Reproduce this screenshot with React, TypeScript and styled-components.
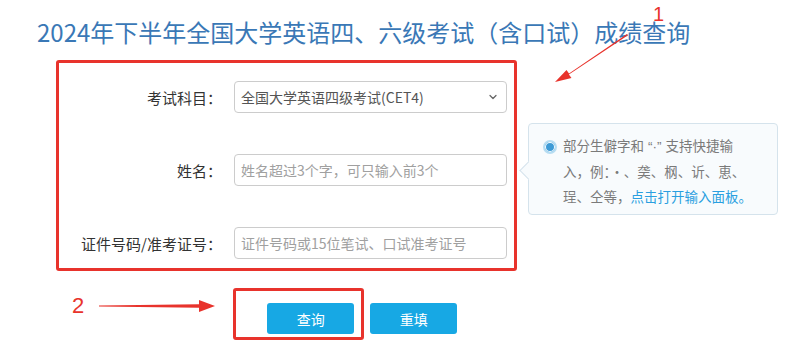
import React from "react";
import styled, { createGlobalStyle } from "styled-components";
import { ChevronDown } from "lucide-react";

const GlobalStyle = createGlobalStyle`
  html, body {
    margin: 0;
    padding: 0;
    background: #FFFFFF;
  }
  body {
    font-family: "Noto Sans CJK SC", "Noto Sans", "Liberation Sans", sans-serif;
  }
`;

const ANNOT_RED = "#E8332C";

const Page = styled.div`
  position: relative;
  width: 800px;
  height: 355px;
  overflow: hidden;
`;

const Title = styled.h1`
  margin: 0;
  padding: 16px 0 0 37px;
  font-size: 24px;
  line-height: 32px;
  font-weight: 400;
  color: #3A78B6;
`;

const Main = styled.div`
  display: flex;
  align-items: flex-start;
  margin-top: 12px;
  padding-left: 56px;
`;

const FormFrame = styled.div`
  width: 461px;
  box-sizing: border-box;
  border: 3px solid ${ANNOT_RED};
  border-radius: 3px;
  padding: 18px 7px 9px 0;
  display: grid;
  grid-template-columns: 163px 273px;
  column-gap: 12px;
  row-gap: 41px;
  align-items: center;
`;

const Label = styled.label`
  text-align: right;
  font-size: 15px;
  color: #333333;
  white-space: nowrap;
`;

const SelectWrap = styled.div`
  position: relative;
  height: 32px;
`;

const Select = styled.select`
  appearance: none;
  width: 100%;
  height: 32px;
  box-sizing: border-box;
  border: 1px solid #CCCCCC;
  border-radius: 4px;
  background: #FFFFFF;
  padding: 0 24px 0 6px;
  font-family: inherit;
  font-size: 14px;
  color: #555555;
  outline: none;
`;

const Chevron = styled(ChevronDown)`
  position: absolute;
  right: 8px;
  top: 10px;
  color: #666666;
  pointer-events: none;
`;

const Input = styled.input`
  width: 100%;
  height: 32px;
  box-sizing: border-box;
  border: 1px solid #CCCCCC;
  border-radius: 4px;
  padding: 0 6px;
  font-family: inherit;
  font-size: 14px;
  color: #555555;
  outline: none;

  &::placeholder {
    color: #A0A0A0;
  }
`;

const Tip = styled.div`
  position: relative;
  margin: 63px 0 0 11px;
  width: 250px;
  height: 92px;
  box-sizing: border-box;
  border: 1px solid #D5E3EC;
  border-radius: 4px;
  background: #F8FBFD;
  padding: 9px 8px 6px 14px;
  display: flex;
  gap: 6px;

  &::before {
    content: "";
    position: absolute;
    left: -7px;
    top: 40px;
    width: 12px;
    height: 12px;
    background: #F8FBFD;
    border-left: 1px solid #D5E3EC;
    border-bottom: 1px solid #D5E3EC;
    transform: rotate(45deg);
  }
`;

const Radio = styled.span`
  flex: none;
  width: 10px;
  height: 10px;
  margin-top: 7px;
  border-radius: 50%;
  border: 2px solid #B7DDF2;
  background: #3E9BD6;
  box-shadow: inset 0 0 0 1px #FFFFFF;
`;

const TipText = styled.p`
  margin: 0;
  font-size: 13.5px;
  line-height: 25px;
  color: #7A7A7A;
  white-space: nowrap;
`;

const Latin = styled.span`
  font-family: "Liberation Sans", sans-serif;
  margin: 0 4px;
`;

const TipLink = styled.a`
  color: #2A9FE0;
  text-decoration: none;
`;

const ActionRow = styled.div`
  display: flex;
  align-items: flex-start;
  margin-top: 17px;
`;

const StepNumber = styled.span`
  margin: 5px 0 0 72px;
  font-family: "Liberation Sans", "Noto Sans", sans-serif;
  font-size: 22px;
  line-height: 26px;
  color: ${ANNOT_RED};
`;

const ArrowSvg = styled.svg`
  margin: 11px 0 0 15px;
`;

const ButtonFrame = styled.div`
  margin-left: 18px;
  border: 3px solid ${ANNOT_RED};
  border-radius: 3px;
  padding: 12px 7px 3px 31px;
`;

const Button = styled.button<{ $offset?: number }>`
  width: 87px;
  height: 31px;
  margin: ${(p) => p.$offset ?? 0}px 0 0 ${(p) => (p.$offset ? 6 : 0)}px;
  border: none;
  border-radius: 3px;
  background: #17A8E4;
  color: #FFFFFF;
  font-family: inherit;
  font-size: 14px;
  cursor: pointer;
`;

const Pointer = styled.svg`
  position: absolute;
  left: 540px;
  top: 0;
`;

const PointerNumber = styled.span`
  position: absolute;
  left: 653px;
  top: 2px;
  font-family: "Liberation Sans", "Noto Sans", sans-serif;
  font-size: 20px;
  line-height: 24px;
  color: ${ANNOT_RED};
`;

const App = () => {
  return (
    <Page>
      <GlobalStyle />
      <Title>2024年下半年全国大学英语四、六级考试（含口试）成绩查询</Title>

      <Main>
        <FormFrame>
          <Label>考试科目：</Label>
          <SelectWrap>
            <Select defaultValue="cet4">
              <option value="cet4">全国大学英语四级考试(CET4)</option>
              <option value="cet6">全国大学英语六级考试(CET6)</option>
            </Select>
            <Chevron size={12} strokeWidth={2.5} />
          </SelectWrap>

          <Label>姓名：</Label>
          <Input placeholder="姓名超过3个字，可只输入前3个" />

          <Label>证件号码/准考证号：</Label>
          <Input placeholder="证件号码或15位笔试、口试准考证号" />
        </FormFrame>

        <Tip>
          <Radio />
          <TipText>
            部分生僻字和<Latin>“·”</Latin>支持快捷输
            <br />
            入，例：·、䶮、㭎、䜣、恵、
            <br />
            珵、仝等，<TipLink>点击打开输入面板。</TipLink>
          </TipText>
        </Tip>
      </Main>

      <ActionRow>
        <StepNumber>2</StepNumber>
        <ArrowSvg width="116" height="14" viewBox="0 0 116 14">
          <polygon points="0,6.6 100,5.2 100,1 116,7 100,13 100,8.8 0,7.4" fill={ANNOT_RED} />
        </ArrowSvg>
        <ButtonFrame>
          <Button>查询</Button>
        </ButtonFrame>
        <Button $offset={15}>重填</Button>
      </ActionRow>

      <Pointer width="100" height="90" viewBox="0 0 100 90">
        <polygon points="87,34 29,73.5 26.5,70 15,82 31.5,78 28.9,74.6 88,35.2" fill={ANNOT_RED} />
      </Pointer>
      <PointerNumber>1</PointerNumber>
    </Page>
  );
};

export default App;
